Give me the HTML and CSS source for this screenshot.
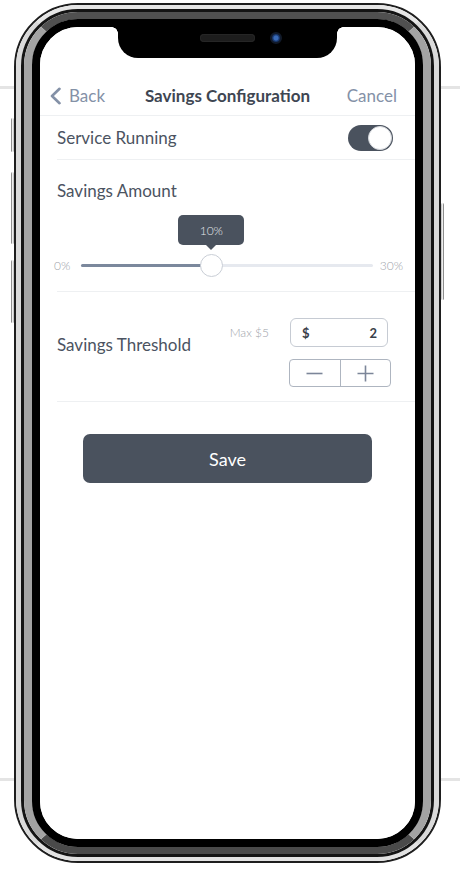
FILE: index.html
```html
<!DOCTYPE html>
<html lang="en">
<head>
<meta charset="utf-8">
<title>Savings Configuration</title>
<link rel="stylesheet" href="styles.css">
</head>
<body>
<div class="device">
  <span class="band band-tl"></span>
  <span class="band band-tr"></span>
  <span class="band band-bl"></span>
  <span class="band band-br"></span>
  <span class="side-btn btn-l1"></span>
  <span class="side-btn btn-l2"></span>
  <span class="side-btn btn-l3"></span>
  <span class="side-btn btn-r1"></span>
  <div class="ring r1"><div class="ring r2"><div class="ring r3"><div class="ring r4"><div class="ring r5">
    <div class="screen">
      <div class="notch"><span class="speaker"></span><span class="camera"></span></div>

      <header class="nav">
        <a class="nav-back">
          <svg class="chev" width="13" height="18" viewBox="0 0 13 18"><path d="M10.5 1.8 L3 9 L10.5 16.2" fill="none" stroke="#8491a7" stroke-width="2.6" stroke-linecap="round" stroke-linejoin="round"/></svg>
          <span>Back</span>
        </a>
        <h1 class="nav-title">Savings Configuration</h1>
        <a class="nav-cancel">Cancel</a>
      </header>

      <div class="row row-service">
        <span class="label">Service Running</span>
        <span class="toggle"><span class="knob"></span></span>
      </div>

      <section class="row row-amount">
        <div class="label">Savings Amount</div>
        <div class="slider">
          <span class="slider-end slider-min">0%</span>
          <div class="track">
            <div class="fill" style="width:130px">
              <span class="thumb"><span class="tip">10%</span></span>
            </div>
          </div>
          <span class="slider-end slider-max">30%</span>
        </div>
      </section>

      <section class="row row-threshold">
        <span class="label label-threshold">Savings Threshold</span>
        <div class="threshold-controls">
          <div class="threshold-input-row">
            <span class="max-note">Max $5</span>
            <div class="money-input"><b>$</b><b>2</b></div>
          </div>
          <div class="stepper">
            <span class="step">
              <svg width="17" height="17" viewBox="0 0 17 17"><path d="M0.5 8.5 H16.5" stroke="#7c8699" stroke-width="1.6"/></svg>
            </span>
            <span class="step">
              <svg width="17" height="17" viewBox="0 0 17 17"><path d="M0.5 8.5 H16.5 M8.5 0.5 V16.5" stroke="#7c8699" stroke-width="1.6"/></svg>
            </span>
          </div>
        </div>
      </section>

      <button class="save">Save</button>
    </div>
  </div></div></div></div></div>
</div>
</body>
</html>
```

FILE: styles.css
```css
html, body {
  margin: 0;
  background: #ffffff;
}
body {
  width: 460px;
  height: 872px;
  box-sizing: border-box;
  padding: 3px 0 0 14px;
  overflow: hidden;
  font-family: Lato, "Noto Sans", "Liberation Sans", sans-serif;
}

.device {
  position: relative;
  width: 427px;
  height: 860px;
}

.ring {
  box-sizing: border-box;
  height: 100%;
  border-style: solid;
}
.r1 {
  border-width: 2px;
  border-color: #1e1e1e;
  border-radius: 64px;
}
.r2 {
  border-width: 4px 5px;
  border-color: #e6e6e6 #dadada #e2e2e2 #dadada;
  border-radius: 62px;
}
.r3 {
  border-width: 3px;
  border-color: #141414;
  border-radius: 57px;
}
.r4 {
  border-width: 7px 8px;
  border-color: #505050 #a3a3a3 #4a4a4a #a3a3a3;
  border-radius: 54px;
}
.r5 {
  border-width: 8px;
  border-color: #000;
  border-radius: 46px;
}

.side-btn {
  position: absolute;
  width: 3px;
  border-radius: 2px;
  background: linear-gradient(90deg, #5a5a5a, #e8e8e8 45%, #ffffff 65%, #9a9a9a);
}
.btn-l1 { left: -3px; top: 115px; height: 34px; }
.btn-l2 { left: -3px; top: 169px; height: 72px; }
.btn-l3 { left: -3px; top: 257px; height: 63px; }
.btn-r1 {
  left: 427px;
  top: 200px;
  height: 97px;
  background: linear-gradient(270deg, #5a5a5a, #e8e8e8 45%, #ffffff 65%, #9a9a9a);
}

.band {
  position: absolute;
  height: 3px;
  background: #e4e4e4;
}
.band-tl { left: -14px; width: 14px; top: 83px; }
.band-tr { left: 427px; width: 19px; top: 83px; }
.band-bl { left: -14px; width: 14px; top: 775px; }
.band-br { left: 427px; width: 19px; top: 775px; }

.screen {
  width: 375px;
  height: 812px;
  border-radius: 38px;
  background: #ffffff;
  overflow: hidden;
  display: flex;
  flex-direction: column;
}

/* notch */
.notch {
  position: relative;
  align-self: center;
  width: 219px;
  height: 31px;
  box-sizing: border-box;
  padding-top: 5px;
  background: #000;
  border-radius: 0 0 20px 20px;
  display: flex;
  justify-content: center;
  align-items: flex-start;
  flex-shrink: 0;
}
.notch::before,
.notch::after {
  content: "";
  position: absolute;
  top: 0;
  width: 6px;
  height: 6px;
}
.notch::before {
  left: -6px;
  background: radial-gradient(circle at 0 100%, transparent 5.5px, #000 6px);
}
.notch::after {
  right: -6px;
  background: radial-gradient(circle at 100% 100%, transparent 5.5px, #000 6px);
}
.speaker {
  margin-top: 2px;
  width: 55px;
  height: 8px;
  border-radius: 4px;
  background: #1d1d1d;
  box-shadow: inset 0 0 0 1px #262626;
}
.camera {
  margin-left: 15px;
  margin-right: -27px;
  width: 12px;
  height: 12px;
  border-radius: 50%;
  box-sizing: border-box;
  border: 2px solid #111a2a;
  background: radial-gradient(circle, #3a6bb8 0 2px, #1d3f7a 3px, #0f2347 5px);
}

/* nav */
.nav {
  margin-top: 18px;
  height: 39px;
  flex-shrink: 0;
  display: grid;
  grid-template-columns: 1fr auto 1fr;
  align-items: center;
  padding: 0 18px;
  border-bottom: 1px solid #eef0f2;
  line-height: 20px;
}
.nav-back {
  display: flex;
  align-items: center;
  gap: 7px;
  margin-left: -9px;
  color: #8491a7;
  font-size: 17px;
}
.nav-title {
  margin: 0;
  font-size: 17px;
  font-weight: 700;
  color: #3e4652;
}
.nav-cancel {
  justify-self: end;
  color: #8491a7;
  font-size: 17px;
}

/* rows */
.row {
  margin-left: 17px;
  border-bottom: 1px solid #eef0f2;
  flex-shrink: 0;
}
.label {
  font-size: 17px;
  line-height: 20px;
  color: #4b5361;
}
.row-service {
  height: 43px;
  display: flex;
  align-items: center;
  justify-content: space-between;
  padding-right: 22px;
}
.toggle {
  width: 45px;
  height: 26px;
  box-sizing: border-box;
  padding: 1px;
  border-radius: 13px;
  background: #4a525e;
  display: flex;
  justify-content: flex-end;
  align-items: center;
}
.knob {
  width: 24px;
  height: 24px;
  box-sizing: border-box;
  border-radius: 50%;
  background: #ffffff;
  border: 1px solid #d4d7dc;
}

.row-amount {
  padding: 21px 0 14px 0;
}
.slider {
  margin: 53px 12px 0 -3px;
  height: 23px;
  display: flex;
  align-items: center;
}
.slider-end {
  font-size: 12px;
  font-weight: 300;
  color: #9da2a9;
}
.track {
  flex: 1;
  margin: 0 7px 0 11px;
  height: 3px;
  border-radius: 2px;
  background: #e6e9ef;
  display: flex;
}
.fill {
  position: relative;
  height: 3px;
  border-radius: 2px;
  background: #7b889c;
}
.thumb {
  position: absolute;
  right: -11.5px;
  top: -10px;
  width: 23px;
  height: 23px;
  box-sizing: border-box;
  border-radius: 50%;
  background: #ffffff;
  border: 1px solid #c9ced6;
}
.tip {
  position: absolute;
  left: 50%;
  bottom: 31px;
  transform: translateX(-50%);
  width: 66px;
  height: 30px;
  border-radius: 5px;
  background: #4a525e;
  color: #e3e6ea;
  font-size: 12px;
  font-weight: 300;
  display: flex;
  align-items: center;
  justify-content: center;
}
.tip::after {
  content: "";
  position: absolute;
  top: 100%;
  left: 50%;
  margin-left: -5px;
  border: 5px solid transparent;
  border-bottom: 0;
  border-top-color: #4a525e;
}

.row-threshold {
  padding: 26px 24px 14px 0;
  display: flex;
  justify-content: space-between;
  align-items: flex-start;
}
.label-threshold {
  margin-top: 17px;
}
.threshold-controls {
  display: flex;
  flex-direction: column;
  align-items: flex-end;
  gap: 12px;
}
.threshold-input-row {
  display: flex;
  align-items: center;
  gap: 21px;
  margin-right: 3px;
}
.max-note {
  font-size: 12px;
  font-weight: 300;
  color: #9da2a9;
}
.money-input {
  width: 98px;
  height: 29px;
  box-sizing: border-box;
  border: 1px solid #c6cbd3;
  border-radius: 6px;
  padding: 0 10px 0 11px;
  display: flex;
  align-items: center;
  justify-content: space-between;
  font-size: 13px;
  color: #3a4049;
}
.stepper {
  width: 102px;
  height: 28px;
  box-sizing: border-box;
  border: 1px solid #aeb5c0;
  border-radius: 4px;
  display: flex;
}
.step {
  flex: 1;
  display: flex;
  align-items: center;
  justify-content: center;
}
.step + .step {
  border-left: 1px solid #aeb5c0;
}

.save {
  align-self: center;
  margin-top: 32px;
  width: 289px;
  height: 49px;
  border: 0;
  border-radius: 7px;
  background: #4a525e;
  color: #ffffff;
  font-family: Lato, "Noto Sans", "Liberation Sans", sans-serif;
  font-size: 18px;
  flex-shrink: 0;
}
```
